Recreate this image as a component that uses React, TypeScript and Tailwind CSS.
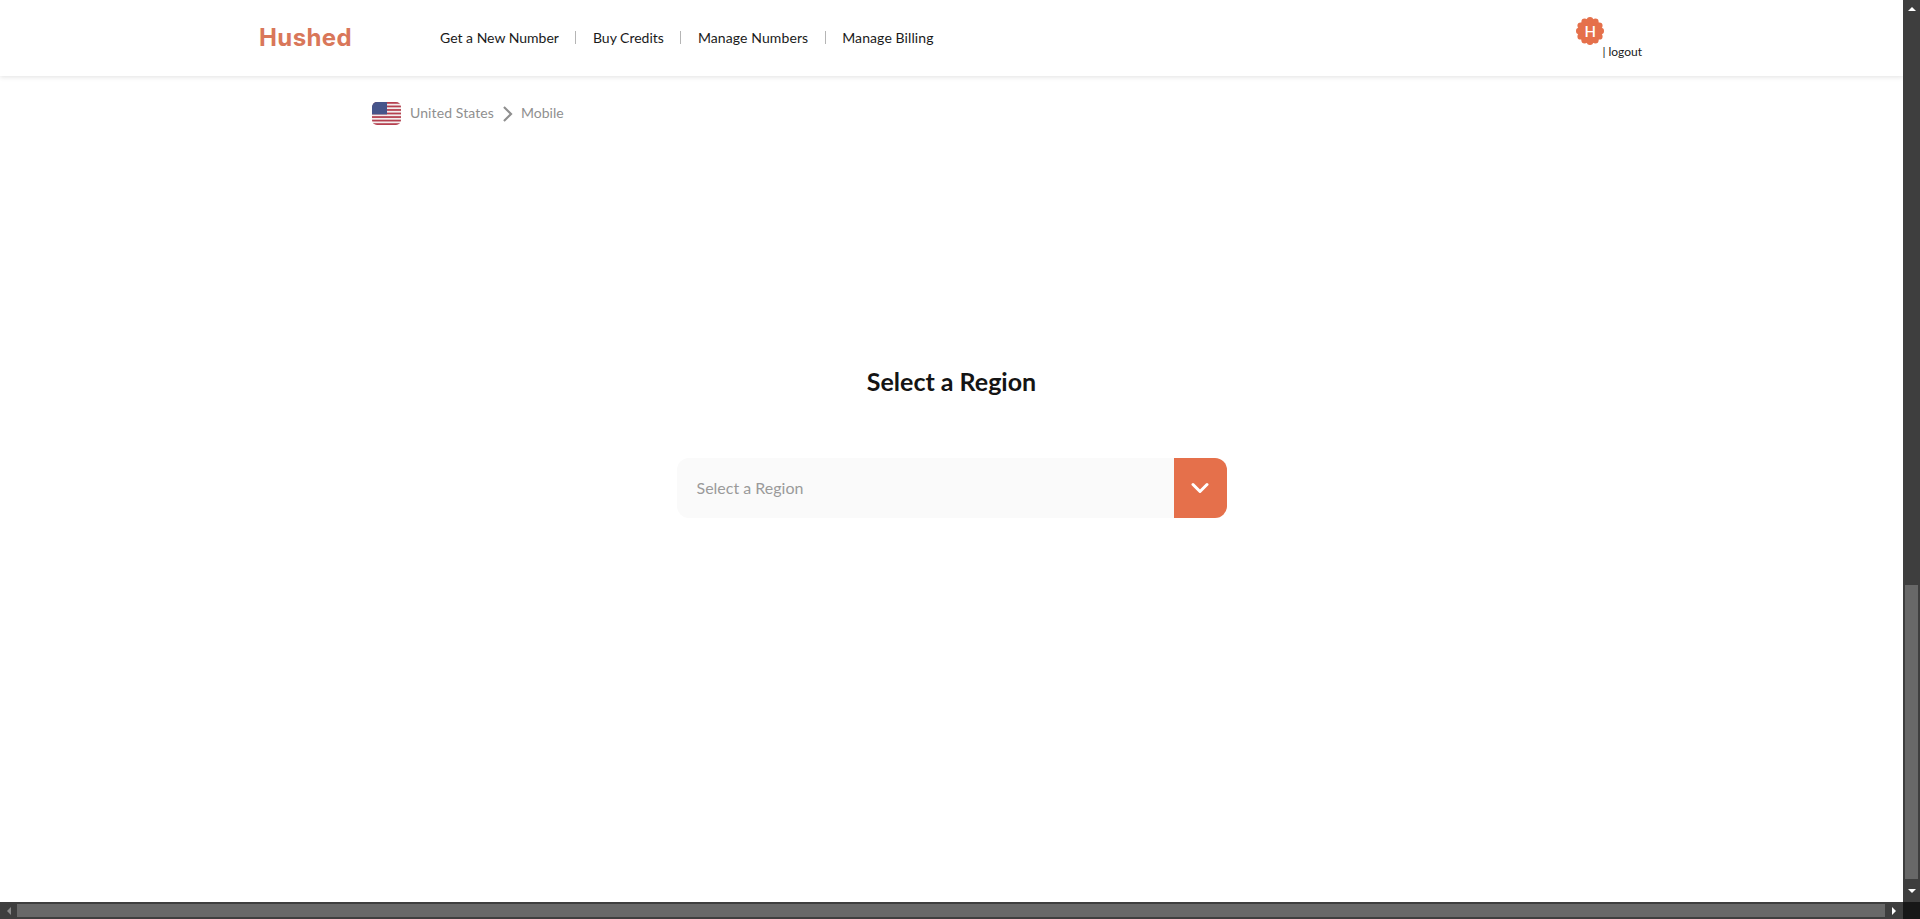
const font = { fontFamily: "Lato, 'Open Sans', sans-serif" };
const logoFont = { fontFamily: "Inter, Lato, sans-serif" };

const navItems = [
  { label: "Get a New Number", cls: "" },
  { label: "Buy Credits", cls: "" },
  { label: "Manage Numbers", cls: "tracking-[0.1px]" },
  { label: "Manage Billing", cls: "tracking-[0.1px]" },
];

function Badge() {
  const bumps = Array.from({ length: 12 }, (_, i) => (i * Math.PI) / 6);
  return (
    <div className="grid h-[28px] w-[28px] place-items-center">
      <svg viewBox="0 0 28 28" className="col-start-1 row-start-1 h-[28px] w-[28px]">
        <circle cx="14" cy="14" r="12" fill="#e5704b" />
        {bumps.map((a, i) => (
          <circle key={i} cx={14 + 10.8 * Math.cos(a)} cy={14 + 10.8 * Math.sin(a)} r="3.2" fill="#e5704b" />
        ))}
      </svg>
      <span className="col-start-1 row-start-1 text-[15px] font-semibold leading-none text-white">H</span>
    </div>
  );
}

function UsFlag() {
  const stripes = [0, 2, 4, 6, 8, 10, 12];
  return (
    <svg viewBox="0 0 29 23" className="h-[23px] w-[29px]">
      <defs>
        <clipPath id="flag-clip">
          <rect width="29" height="23" rx="5" />
        </clipPath>
      </defs>
      <g clipPath="url(#flag-clip)">
        <rect width="29" height="23" fill="#f3eeee" />
        {stripes.map((s) => (
          <rect key={s} y={(s * 23) / 13} width="29" height={23 / 13} fill="#b5404f" />
        ))}
        <rect width="15" height="12.4" fill="#46558a" />
      </g>
    </svg>
  );
}

function VerticalScrollbar() {
  return (
    <div className="flex w-[17px] shrink-0 flex-col bg-[#3e3e3e]">
      <div className="flex h-[17px] items-center justify-center">
        <div className="h-0 w-0 border-x-[4px] border-b-[4px] border-x-transparent border-b-white" />
      </div>
      <div className="flex-1" />
      <div className="mx-[2px] h-[294px] bg-[#686868]" />
      <div className="flex h-[23px] items-center justify-center">
        <div className="h-0 w-0 border-x-[4px] border-t-[4px] border-x-transparent border-t-white" />
      </div>
    </div>
  );
}

function HorizontalScrollbar() {
  return (
    <div className="flex h-[17px] shrink-0">
      <div className="flex flex-1 items-center bg-[#3e3e3e]">
        <div className="flex w-[17px] justify-center">
          <div className="h-0 w-0 border-y-[4px] border-r-[4px] border-y-transparent border-r-[#8a8a8a]" />
        </div>
        <div className="h-[13px] flex-1 bg-[#686868]" />
        <div className="flex w-[18px] justify-center">
          <div className="h-0 w-0 border-y-[4px] border-l-[4px] border-y-transparent border-l-white" />
        </div>
      </div>
      <div className="w-[17px] bg-[#171717]" />
    </div>
  );
}

export default function App() {
  return (
    <div className="flex h-[919px] w-[1920px] flex-col overflow-hidden bg-white" style={font}>
      <div className="flex min-h-0 flex-1">
        <div className="flex flex-1 flex-col">
          {/* header */}
          <div className="flex h-[76px] shrink-0 items-center pl-[259px] pr-[261px] shadow-[0_1px_5px_rgba(0,0,0,0.12)]">
            <div className="w-[181px] text-[24px] font-bold leading-none tracking-[0.4px] text-[#d9775a]" style={logoFont}>
              Hushed
            </div>
            <div className="flex items-center pb-[2px] text-[14px] text-[#1a1a1a]">
              {navItems.map((item, i) => (
                <div key={item.label} className="flex items-center">
                  {i > 0 && <span className="mx-[16.5px] h-[13px] w-px bg-[#b5b5b5]" />}
                  <span className={item.cls}>{item.label}</span>
                </div>
              ))}
            </div>
            <div className="ml-auto flex flex-col self-start pt-[17px]">
              <div className="-ml-[26px]">
                <Badge />
              </div>
              <div className="-mt-[1px] text-[12px] leading-[15px] text-[#1a1a1a]">| logout</div>
            </div>
          </div>

          {/* breadcrumb */}
          <div className="flex items-center pl-[372px] pt-[26px] text-[14px] leading-[20px] text-[#8f8f8f]">
            <UsFlag />
            <span className="-mt-[2px] ml-[9px] tracking-[0.1px]">United States</span>
            <svg viewBox="0 0 12 18" className="ml-[8px] mr-[8px] h-[16px] w-[11px]" fill="none" stroke="#8f8f8f" strokeWidth="2.4">
              <path d="M2 1l8 8-8 8" />
            </svg>
            <span className="-mt-[2px]">Mobile</span>
          </div>

          {/* region picker */}
          <h1 className="mt-[240px] text-center text-[25px] font-bold leading-[32px] text-[#141414]">Select a Region</h1>
          <div className="mx-auto mt-[61px] flex h-[60px] w-[550px] overflow-hidden rounded-[12px] bg-[#fafafa]">
            <div className="flex flex-1 items-center pl-[20px] text-[16px] text-[#9a9a9a]">Select a Region</div>
            <div className="flex w-[53px] items-center justify-center bg-[#e5704b]">
              <svg viewBox="0 0 18 12" className="h-[12px] w-[18px]" fill="none" stroke="#fff" strokeWidth="3" strokeLinecap="round" strokeLinejoin="round">
                <path d="M2 2.5l7 7 7-7" />
              </svg>
            </div>
          </div>
        </div>
        <VerticalScrollbar />
      </div>
      <HorizontalScrollbar />
    </div>
  );
}
